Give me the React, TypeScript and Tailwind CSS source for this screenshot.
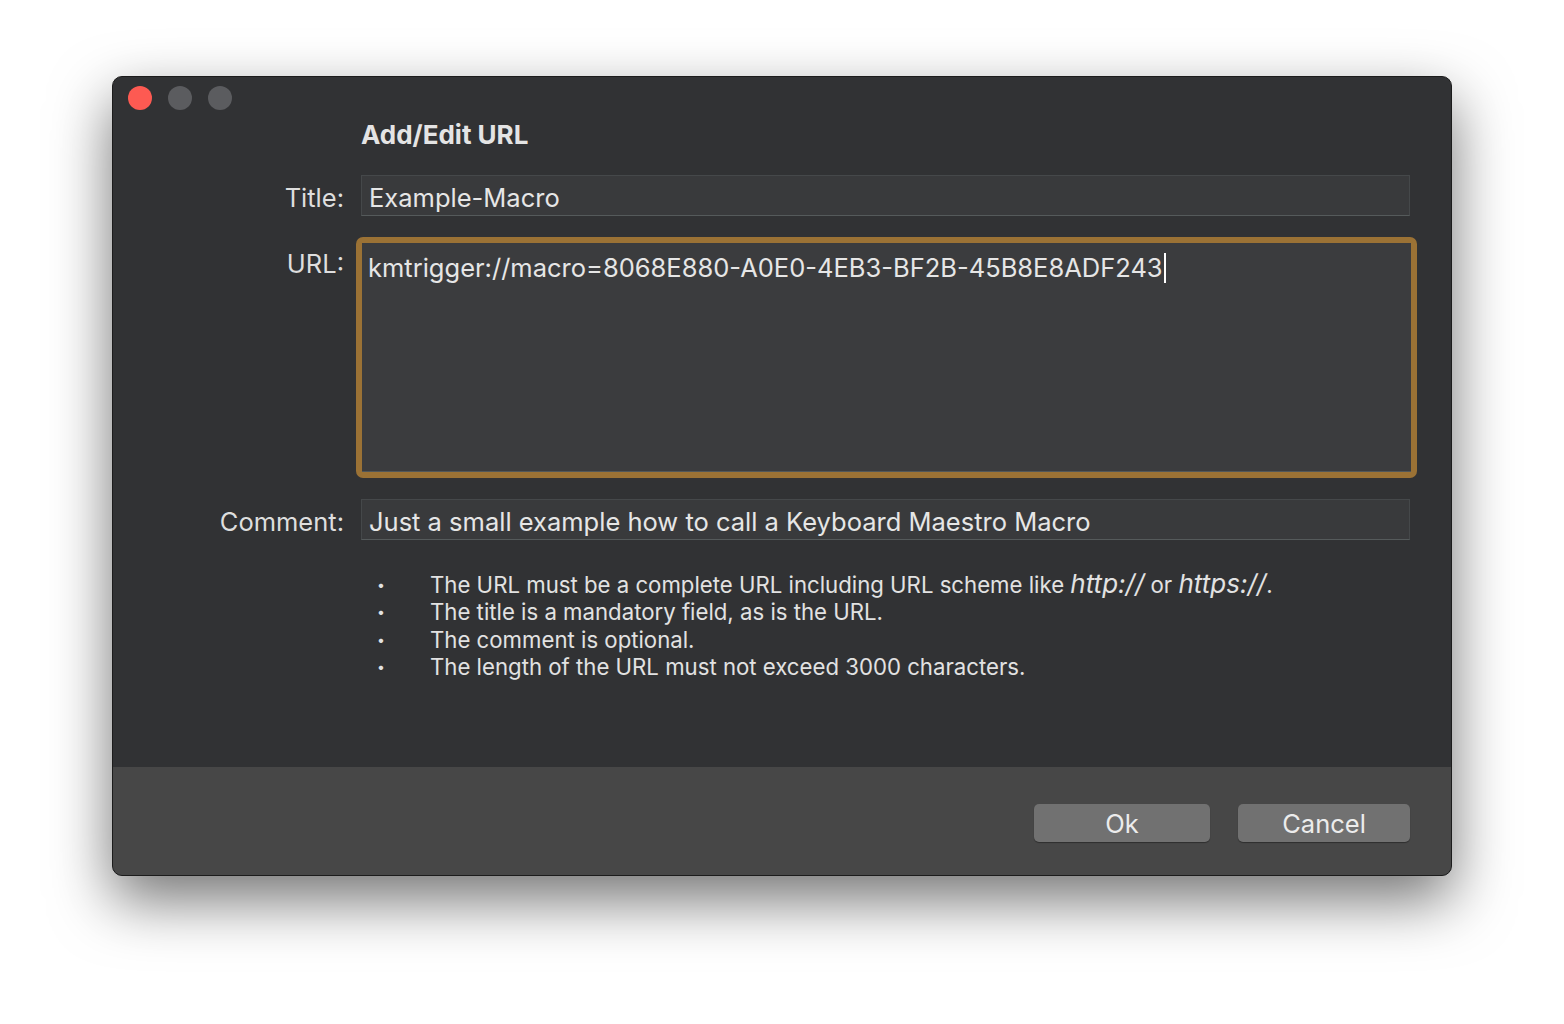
import React from "react";

const font = { fontFamily: 'Inter, "Noto Sans", "Liberation Sans", sans-serif' };

function Field({ children }: { children: React.ReactNode }) {
  return (
    <div className="h-[41px] w-[1049px] bg-[#393a3c] border border-[#45484a] border-b-[#555a5b] flex items-center pl-[7px] pt-[5px] text-[25.5px] text-[#e6e6e6] leading-none">
      {children}
    </div>
  );
}

function Label({ children, pt }: { children: React.ReactNode; pt: string }) {
  return (
    <div className={`w-[231px] h-[41px] flex items-center justify-end text-[25.5px] text-[#dedede] leading-none ${pt}`}>
      {children}
    </div>
  );
}

export default function App() {
  const bullets: React.ReactNode[] = [
    <>
      The URL must be a complete URL including URL scheme like{" "}
      <span className="italic text-[26px]">http://</span> or{" "}
      <span className="italic text-[26px]">https://</span>.
    </>,
    <>The title is a mandatory field, as is the URL.</>,
    <>The comment is optional.</>,
    <>The length of the URL must not exceed 3000 characters.</>,
  ];
  return (
    <div className="w-[1564px] h-[1024px] bg-white pt-[76px] pl-[112px]" style={font}>
      <div className="w-[1340px] h-[800px] rounded-[10px] border border-[#1c1c1c] bg-[#313234] shadow-[0_24px_60px_rgba(0,0,0,0.55)] flex flex-col overflow-hidden">
        <div className="flex-1 flex flex-col">
          <div className="flex gap-[16px] pl-[15px] pt-[9px]">
            <div className="w-[24px] h-[24px] rounded-full bg-[#fd5a52]" />
            <div className="w-[24px] h-[24px] rounded-full bg-[#5b5c5f]" />
            <div className="w-[24px] h-[24px] rounded-full bg-[#5b5c5f]" />
          </div>
          <div className="pl-[248px] mt-[10px] text-[26px] font-bold text-[#e4e4e4] leading-[30px]">Add/Edit URL</div>

          <div className="flex items-start mt-[25px]">
            <Label pt="pt-[5px]">Title:</Label>
            <div className="ml-[17px]">
              <Field>Example-Macro</Field>
            </div>
          </div>

          <div className="flex items-start mt-[21px]">
            <Label pt="pt-[13px]">URL:</Label>
            <div className="ml-[12px] w-[1061px] h-[241px] rounded-[7px] bg-[#9b7235] p-[6px]">
              <div className="w-full h-full bg-[#3b3c3e] border-b border-[#50575a] pl-[6px] pt-[11px] text-[25.5px] text-[#e6e6e6] leading-[28px] flex items-start">
                <span>kmtrigger://macro=8068E880-A0E0-4EB3-BF2B-45B8E8ADF243</span>
                <span className="inline-block w-[2px] h-[30px] bg-white ml-[1px] -mt-[1px]" />
              </div>
            </div>
          </div>

          <div className="flex items-start mt-[21px]">
            <Label pt="pt-[5px]">Comment:</Label>
            <div className="ml-[17px]">
              <Field>Just a small example how to call a Keyboard Maestro Macro</Field>
            </div>
          </div>

          <div className="mt-[30px] pl-[264px] flex flex-col text-[22.2px] text-[#e2e2e2] leading-[27.3px]">
            {bullets.map((b, i) => (
              <div key={i} className="flex items-center">
                <span className="w-[53px] text-[14px]">•</span>
                <span>{b}</span>
              </div>
            ))}
          </div>
        </div>

        <div className="h-[108px] bg-[#474747] flex items-start justify-end pr-[41px] pt-[37px] gap-[28px]">
          <div className="w-[176px] h-[38px] rounded-[5px] bg-[#717171] shadow-[0_1px_1px_rgba(0,0,0,0.35)] flex items-center justify-center pt-[3px] text-[25.5px] text-[#ececec]">Ok</div>
          <div className="w-[172px] h-[38px] rounded-[5px] bg-[#717171] shadow-[0_1px_1px_rgba(0,0,0,0.35)] flex items-center justify-center pt-[3px] text-[25.5px] text-[#ececec]">Cancel</div>
        </div>
      </div>
    </div>
  );
}
